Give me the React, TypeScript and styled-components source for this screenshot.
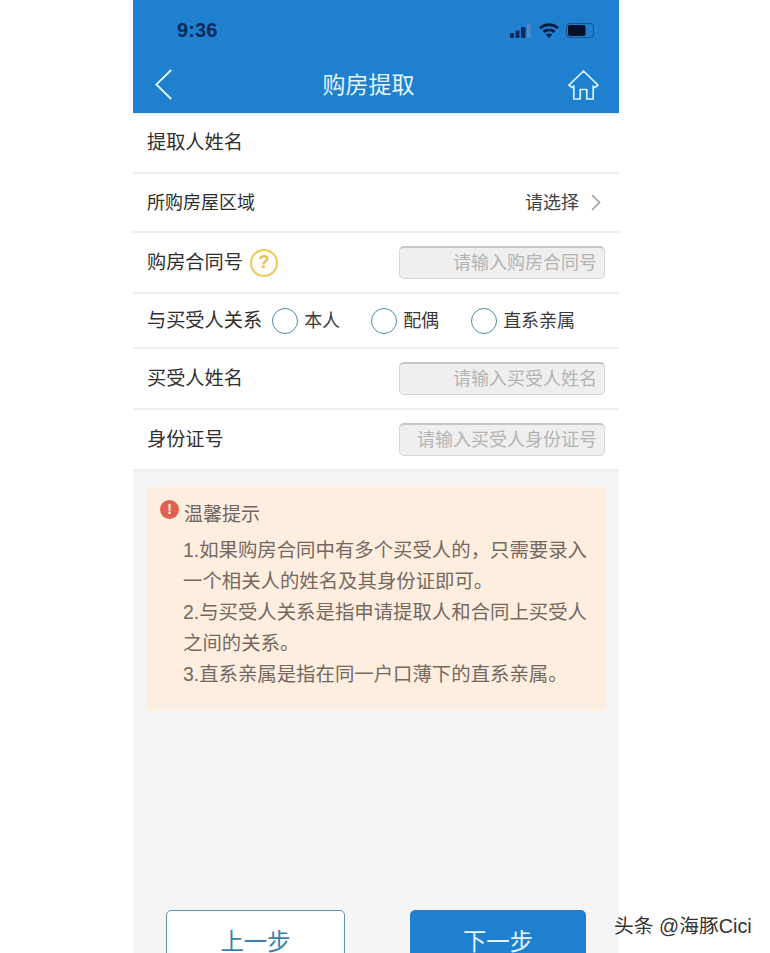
import React, { FC } from 'react';
import styled, { createGlobalStyle } from 'styled-components';

const GlobalStyle = createGlobalStyle`
  html, body {
    margin: 0;
    padding: 0;
    height: 953px;
    overflow: hidden;
    background: #fff;
    font-family: 'Liberation Sans', 'Noto Sans CJK SC', sans-serif;
  }
`;

const Phone = styled.div`
  width: 486px;
  height: 953px;
  margin-left: 133px;
  background: #f5f5f6;
  display: flex;
  flex-direction: column;
  overflow: hidden;
`;

const Header = styled.header`
  position: relative;
  background: #1f80d0;
  height: 113px;
  flex-shrink: 0;
  display: flex;
  flex-direction: column;
  box-shadow: 0 2px 3px rgba(31, 128, 208, 0.14);
`;

const StatusBar = styled.div`
  height: 60px;
  padding: 18px 22px 0 44px;
  box-sizing: border-box;
  display: flex;
  justify-content: space-between;
  align-items: flex-start;
`;

const Clock = styled.span`
  font-size: 20px;
  line-height: 24px;
  font-weight: 700;
  letter-spacing: 0.1px;
  color: #0b2a5c;
`;

const StatusIcons = styled.div`
  display: flex;
  align-items: center;
  gap: 7px;
  padding-top: 5px;
`;

const NavBar = styled.nav`
  height: 53px;
  padding: 0 20px 4px 22px;
  box-sizing: border-box;
  display: flex;
  justify-content: space-between;
  align-items: center;
`;

const Title = styled.h1`
  margin: 0 3px 0 0;
  font-size: 23px;
  line-height: 30px;
  font-weight: 400;
  color: #e4f5ff;
`;

const Form = styled.div`
  background: #fff;
  flex-shrink: 0;
`;

const Row = styled.div<{ $height: number }>`
  height: ${(p) => p.$height}px;
  box-sizing: border-box;
  padding: 0 14px;
  display: flex;
  align-items: center;
  justify-content: space-between;
  border-bottom: 2px solid #ededed;
`;

const Label = styled.span<{ $size?: number }>`
  font-size: ${(p) => p.$size ?? 19.2}px;
  line-height: 24px;
  padding-top: 1px;
  color: #2f2f2f;
  white-space: nowrap;
`;

const LabelGroup = styled.div`
  display: flex;
  align-items: center;
  gap: 7px;
`;

const HelpBadge = styled.span`
  width: 24px;
  height: 24px;
  border: 2px solid #eccb58;
  border-radius: 50%;
  display: flex;
  align-items: center;
  justify-content: center;
  font-size: 18px;
  font-weight: 700;
  color: #e9bf4b;
  background: #fffdf6;
`;

const Picker = styled.div`
  display: flex;
  align-items: center;
  gap: 12px;
  font-size: 18px;
  line-height: 22px;
  color: #444;
  padding-right: 4px;
`;

const FakeInput = styled.div`
  width: 206px;
  height: 33px;
  box-sizing: border-box;
  border: 1px solid #d6d6d6;
  border-top: 2px solid #c6c6c6;
  border-radius: 5px;
  background: #efefef;
  padding: 0 7px;
  text-align: right;
  font-size: 18px;
  line-height: 30px;
  color: #b4b4b4;
  white-space: nowrap;
`;

const RadioGroup = styled.div`
  display: flex;
  align-items: center;
  padding-left: 10px;
  flex: 1;
`;

const RadioItem = styled.label<{ $width: number }>`
  width: ${(p) => p.$width}px;
  display: flex;
  align-items: center;
  gap: 6px;
  font-size: 18px;
  line-height: 24px;
  color: #3a3a3a;
  white-space: nowrap;
`;

const RadioCircle = styled.span`
  width: 26px;
  height: 26px;
  box-sizing: border-box;
  border: 1.5px solid #4f8ea6;
  border-radius: 50%;
  background: #fff;
`;

const Notice = styled.section`
  margin: 16px 14px 0 14px;
  height: 223px;
  flex-shrink: 0;
  box-sizing: border-box;
  background: #fdeee0;
  padding: 14px 14px 0 13px;
`;

const NoticeHead = styled.div`
  display: flex;
  align-items: flex-start;
  gap: 5px;
  font-size: 19px;
  line-height: 28px;
  color: #6e6660;
`;

const NoticeDot = styled.span`
  width: 19px;
  height: 19px;
  margin-top: -1px;
  border-radius: 50%;
  background: #e2604f;
  color: #fdeee0;
  font-size: 14px;
  line-height: 19px;
  font-weight: 700;
  text-align: center;
`;

const NoticeBody = styled.p`
  margin: 6px 0 0 23px;
  font-size: 19.4px;
  line-height: 31px;
  color: #75695f;
`;

const Actions = styled.div`
  margin-top: auto;
  height: 43px;
  padding: 0 33px;
  display: flex;
  justify-content: space-between;
  flex-shrink: 0;
`;

const ActionButton = styled.button<{ $primary?: boolean }>`
  width: ${(p) => (p.$primary ? 176 : 179)}px;
  height: 60px;
  box-sizing: border-box;
  border-radius: 5px;
  border: 1px solid ${(p) => (p.$primary ? '#1f80d0' : '#5b93b5')};
  background: ${(p) => (p.$primary ? '#1f80d0' : '#fff')};
  color: ${(p) => (p.$primary ? '#e4f5ff' : '#3c7fa8')};
  font-family: inherit;
  font-size: 23.4px;
  padding: 3px 0 0;
  line-height: 28px;
  display: block;
`;

const Watermark = styled.span`
  position: absolute;
  left: 614px;
  top: 915px;
  font-size: 19.8px;
  line-height: 22px;
  color: #333;
  white-space: nowrap;
`;

const CellIcon: FC = () => (
  <svg width="22" height="14" viewBox="0 0 22 14">
    <rect x="0" y="9" width="4" height="5" rx="1" fill="#0b2a5c" />
    <rect x="5.500" y="6.500" width="4" height="7.500" rx="1" fill="#0b2a5c" />
    <rect x="11" y="3" width="4.500" height="11" rx="1" fill="#0b2a5c" />
    <rect x="17" y="0" width="3.500" height="14" rx="1" fill="#4d8cc4" />
  </svg>
);

const WifiIcon: FC = () => (
  <svg width="20" height="15" viewBox="0 0 20 15" fill="none" stroke="#071f45" strokeWidth="2.8">
    <path d="M1 5.200C6 .6 14 .6 19 5.200" />
    <path d="M4.400 8.900c3.200-2.800 8-2.800 11.200 0" />
    <path d="M10 15l-3.300-3.400c1.900-1.400 4.700-1.400 6.600 0z" fill="#071f45" stroke="none" />
  </svg>
);

const BatteryIcon: FC = () => (
  <svg width="31" height="15" viewBox="0 0 31 15" fill="none">
    <rect x="0.500" y="0.500" width="27" height="14" rx="3.500" stroke="#1d4f8c" />
    <rect x="2" y="2" width="17.500" height="11" rx="2" fill="#04102a" />
    <path d="M29 5.500v4c.9-.3 1.400-1.100 1.400-2S29.900 5.800 29 5.500z" fill="#4d8cc4" />
  </svg>
);

const BackIcon: FC = () => (
  <svg width="17" height="31" viewBox="0 0 17 31" fill="none" stroke="#e4f5ff" strokeWidth="1.8">
    <path d="M16.200 1L1.300 15.500 16.200 30" />
  </svg>
);

const HomeIcon: FC = () => (
  <svg width="31" height="30" viewBox="0 0 31 30" fill="none" stroke="#d8f3ff" strokeWidth="1.7" strokeLinejoin="round">
    <path d="M15.500 1L1 15.200l3.200 2.300 1.600-1.500V29h6.400V19.500h6.600V29h6.400V16l1.600 1.500 3.200-2.300z" />
  </svg>
);

const ChevronIcon: FC = () => (
  <svg width="10" height="17" viewBox="0 0 10 17" fill="none" stroke="#a2a2a2" strokeWidth="1.700">
    <path d="M1 1l7.500 7.500L1 16" />
  </svg>
);

const relations: { name: string; width: number }[] = [
  { name: '本人', width: 99 },
  { name: '配偶', width: 100 },
  { name: '直系亲属', width: 110 }
];

const App: FC = () => {
  return (
    <>
      <GlobalStyle />
      <Phone>
        <Header>
          <StatusBar>
            <Clock>9:36</Clock>
            <StatusIcons>
              <CellIcon />
              <WifiIcon />
              <BatteryIcon />
            </StatusIcons>
          </StatusBar>
          <NavBar>
            <BackIcon />
            <Title>购房提取</Title>
            <HomeIcon />
          </NavBar>
        </Header>
        <Form>
          <Row $height={61}>
            <Label>提取人姓名</Label>
          </Row>
          <Row $height={59}>
            <Label $size={18}>所购房屋区域</Label>
            <Picker>
              请选择
              <ChevronIcon />
            </Picker>
          </Row>
          <Row $height={61}>
            <LabelGroup>
              <Label>购房合同号</Label>
              <HelpBadge>?</HelpBadge>
            </LabelGroup>
            <FakeInput>请输入购房合同号</FakeInput>
          </Row>
          <Row $height={55}>
            <Label>与买受人关系</Label>
            <RadioGroup>
              {relations.map((relation) => (
                <RadioItem key={relation.name} $width={relation.width}>
                  <RadioCircle />
                  {relation.name}
                </RadioItem>
              ))}
            </RadioGroup>
          </Row>
          <Row $height={61}>
            <Label>买受人姓名</Label>
            <FakeInput>请输入买受人姓名</FakeInput>
          </Row>
          <Row $height={61}>
            <Label>身份证号</Label>
            <FakeInput>请输入买受人身份证号</FakeInput>
          </Row>
        </Form>
        <Notice>
          <NoticeHead>
            <NoticeDot>!</NoticeDot>
            温馨提示
          </NoticeHead>
          <NoticeBody>
            1.如果购房合同中有多个买受人的，只需要录入一个相关人的姓名及其身份证即可。
            <br />
            2.与买受人关系是指申请提取人和合同上买受人之间的关系。
            <br />
            3.直系亲属是指在同一户口薄下的直系亲属。
          </NoticeBody>
        </Notice>
        <Actions>
          <ActionButton>上一步</ActionButton>
          <ActionButton $primary>下一步</ActionButton>
        </Actions>
      </Phone>
      <Watermark>头条 @海豚Cici</Watermark>
    </>
  );
};

export default App;
